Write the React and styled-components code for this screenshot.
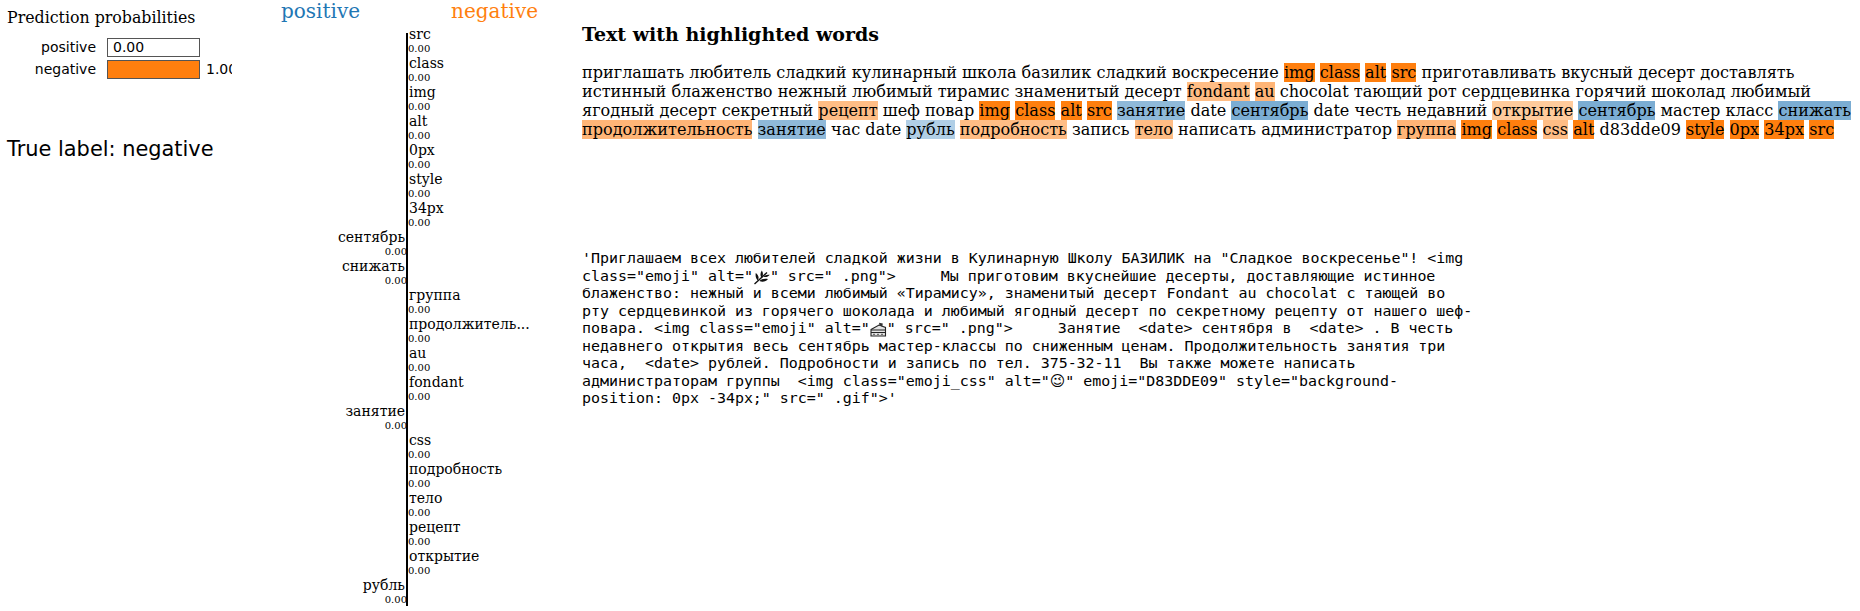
import React from "react";
import styled, { createGlobalStyle } from "styled-components";

const Global = createGlobalStyle`
  html, body { margin: 0; padding: 0; background: #fff; overflow: hidden; }
  body { font-family: "DejaVu Serif", serif; color: #000; }
`;

const Page = styled.div`
  display: flex;
  align-items: flex-start;
  width: 1860px;
  height: 611px;
  overflow: hidden;
`;

const ProbaColumn = styled.div`
  width: 233px;
  flex: none;
  padding: 8px 0 0 7px;
  box-sizing: border-box;
`;
const ProbaTitle = styled.div`
  font-size: 15.8px;
  line-height: 19px;
`;
const ProbaRows = styled.div`
  display: flex;
  flex-direction: column;
  gap: 2px;
  margin-top: 10px;
`;
const ProbaRow = styled.div`
  display: flex;
  align-items: center;
  height: 20px;
  width: 225px;
  overflow: hidden;
  font: 14px "DejaVu Sans", sans-serif;
`;
const ProbaLabel = styled.span`
  width: 100px;
  flex: none;
  text-align: right;
  padding-right: 11px;
  box-sizing: border-box;
`;
const ProbaBar = styled.div`
  width: 93px;
  height: 19px;
  flex: none;
  box-sizing: border-box;
  border: 1px solid #555;
  background: ${(p) => p.$fill};
  padding-left: 5px;
  line-height: 17px;
`;
const ProbaValue = styled.span`
  margin-left: 6px;
  white-space: nowrap;
`;
const TrueLabel = styled.div`
  font: 20.9px "DejaVu Sans", sans-serif;
  margin-top: 58px;
`;

const ChartColumn = styled.div`
  width: 349px;
  flex: none;
`;
const ChartHead = styled.div`
  display: flex;
  height: 33px;
  font-size: 20px;
  line-height: 22px;
`;
const HeadLabel = styled.div`
  color: ${(p) => p.$color};
  margin-left: ${(p) => p.$left}px;
`;
const Row = styled.div`
  display: grid;
  grid-template-columns: 174px 1fr;
  height: 29px;
  font-size: 14px;
  &:nth-child(2) {
    height: 22px;
  }
  &:nth-child(2) span:first-child {
    margin-top: -7px;
  }
  &:last-child {
    height: 26px;
  }
`;
const Side = styled.div`
  display: flex;
  flex-direction: column;
  align-items: flex-end;
`;
const RightSide = styled.div`
  display: flex;
  flex-direction: column;
  align-items: flex-start;
  margin-left: -1px;
  border-left: 2px solid #000;
`;
const Word = styled.span`
  line-height: 17px;
  padding: 0 ${(p) => (p.$left ? 2 : 0)}px 0 ${(p) => (p.$left ? 0 : 1)}px;
`;
const Val = styled.span`
  font-size: 10px;
  line-height: 12px;
`;

const TextColumn = styled.div`
  flex: 1;
  min-width: 0;
`;
const Heading = styled.h3`
  margin: 23px 0 0;
  font-size: 19px;
  line-height: 22px;
  font-weight: bold;
`;
const Highlighted = styled.p`
  margin: 18px 0 0;
  font-size: 16.08px;
  line-height: 19px;
  width: 1272px;
`;
const Mark = styled.span`
  background: ${(p) => p.$bg};
`;
const Raw = styled.pre`
  margin: 111px 0 0;
  font: 14.95px "DejaVu Sans Mono", "DejaVu Sans", monospace;
  line-height: 17.5px;
  white-space: pre;
`;
const Glyph = styled.svg`
  vertical-align: -2px;
  margin: -2px 0;
`;

const O1 = "#ff7f0e";
const O2 = "#ffb577";
const O3 = "#ffbd85";
const O4 = "#ffcb9c";
const B1 = "#7badd3";
const B2 = "#8fb9d9";
const B3 = "#b1cfe6";

const rows = [
  ["src"], ["class"], ["img"], ["alt"], ["0px"], ["style"], ["34px"],
  ["сентябрь", 1], ["снижать", 1], ["группа"], ["продолжитель..."], ["au"], ["fondant"],
  ["занятие", 1], ["css"], ["подробность"], ["тело"], ["рецепт"], ["открытие"], ["рубль", 1],
];

const tokens = [
  "приглашать любитель сладкий кулинарный школа базилик сладкий воскресение",
  ["img", O1], ["class", O1], ["alt", O1], ["src", O1],
  "приготавливать вкусный десерт доставлять истинный блаженство нежный любимый тирамис знаменитый десерт",
  ["fondant", O3], ["au", O2],
  "chocolat тающий рот сердцевинка горячий шоколад любимый ягодный десерт секретный",
  ["рецепт", O3], "шеф повар", ["img", O1], ["class", O1], ["alt", O1], ["src", O1], ["занятие", B2],
  "date", ["сентябрь", B1], "date честь недавний", ["открытие", O4], ["сентябрь", B1], "мастер класс", ["снижать", B1],
  ["продолжительность", O2], ["занятие", B2], "час date", ["рубль", B3], ["подробность", O3], "запись", ["тело", O3],
  "написать администратор", ["группа", O2], ["img", O1], ["class", O1], ["css", O3], ["alt", O1], "d83dde09",
  ["style", O1], ["0px", O1], ["34px", O1], ["src", O1],
];

const Herb = () => (
  <Glyph width="17" height="15" viewBox="0 0 17 15">
    <path d="M1.500 14 C5 11 9 7 14 2.500" fill="none" stroke="#111" strokeWidth="1.400" />
    <path d="M4.800 10.500 C2.800 8.500 2.200 6 2.800 3 C5.300 4.800 6.500 7.800 4.800 10.500 Z M8.300 7.500 C7 5.300 7.300 3 8.800 0.500 C10.500 3 10.300 5.800 8.300 7.500 Z M6.500 11 C8.800 8.800 12 8.300 15 9 C13 11.500 9.500 12.500 6.500 11 Z M10.500 6.800 C12 5 14.200 4.300 16.800 4.800 C15 6.900 12.800 7.600 10.500 6.800 Z" fill="#111" />
  </Glyph>
);
const Cake = () => (
  <Glyph width="17" height="15" viewBox="0 0 17 15">
    <path d="M1 7.500 L9 3 L15.500 5.500 L15.500 14 L1 14 Z" fill="#e4e4e4" stroke="#222" strokeWidth="1.100" />
    <path d="M1 8 L15.500 8 M1 10.500 L15.500 10.500" stroke="#222" strokeWidth="1.100" />
    <path d="M3 12.300 H5 M7 12.300 H9 M11 12.300 H13" stroke="#555" strokeWidth="1" />
    <path d="M9.500 3.500 L9 0.800 L12.800 1.500 L12.300 4.500 Z" fill="#333" />
  </Glyph>
);

export default function App() {
  return (
    <Page>
      <Global />
      <ProbaColumn>
        <ProbaTitle>Prediction probabilities</ProbaTitle>
        <ProbaRows>
          <ProbaRow>
            <ProbaLabel>positive</ProbaLabel>
            <ProbaBar $fill="#fff">0.00</ProbaBar>
          </ProbaRow>
          <ProbaRow>
            <ProbaLabel>negative</ProbaLabel>
            <ProbaBar $fill="#ff7f0e" />
            <ProbaValue>1.00</ProbaValue>
          </ProbaRow>
        </ProbaRows>
        <TrueLabel>True label: negative</TrueLabel>
      </ProbaColumn>
      <ChartColumn>
        <ChartHead>
          <HeadLabel $color="#1f77b4" $left={48}>positive</HeadLabel>
          <HeadLabel $color="#ff7f0e" $left={91}>negative</HeadLabel>
        </ChartHead>
        {rows.map(([w, left], i) => (
          <Row key={i}>
            <Side>
              {left ? <Word $left>{w}</Word> : null}
              {left ? <Val>0.00</Val> : null}
            </Side>
            <RightSide>
              {left ? null : <Word>{w}</Word>}
              {left ? null : <Val>0.00</Val>}
            </RightSide>
          </Row>
        ))}
      </ChartColumn>
      <TextColumn>
        <Heading>Text with highlighted words</Heading>
        <Highlighted>
          {tokens.map((t, i) =>
            typeof t === "string" ? (
              <React.Fragment key={i}>{t} </React.Fragment>
            ) : (
              <React.Fragment key={i}>
                <Mark $bg={t[1]}>{t[0]}</Mark>{" "}
              </React.Fragment>
            )
          )}
        </Highlighted>
        <Raw>
{`'Приглашаем всех любителей сладкой жизни в Кулинарную Школу БАЗИЛИК на "Сладкое воскресенье"! <img
class="emoji" alt="`}<Herb />{`" src=" .png">     Мы приготовим вкуснейшие десерты, доставляющие истинное
блаженство: нежный и всеми любимый «Тирамису», знаменитый десерт Fondant au chocolat с тающей во
рту сердцевинкой из горячего шоколада и любимый ягодный десерт по секретному рецепту от нашего шеф-
повара. <img class="emoji" alt="`}<Cake />{`" src=" .png">     Занятие  <date> сентября в  <date> . В честь
недавнего открытия весь сентябрь мастер-классы по сниженным ценам. Продолжительность занятия три
часа,  <date> рублей. Подробности и запись по тел. 375-32-11  Вы также можете написать
администраторам группы  <img class="emoji_css" alt="😉" emoji="D83DDE09" style="background-
position: 0px -34px;" src=" .gif">'`}
        </Raw>
      </TextColumn>
    </Page>
  );
}
